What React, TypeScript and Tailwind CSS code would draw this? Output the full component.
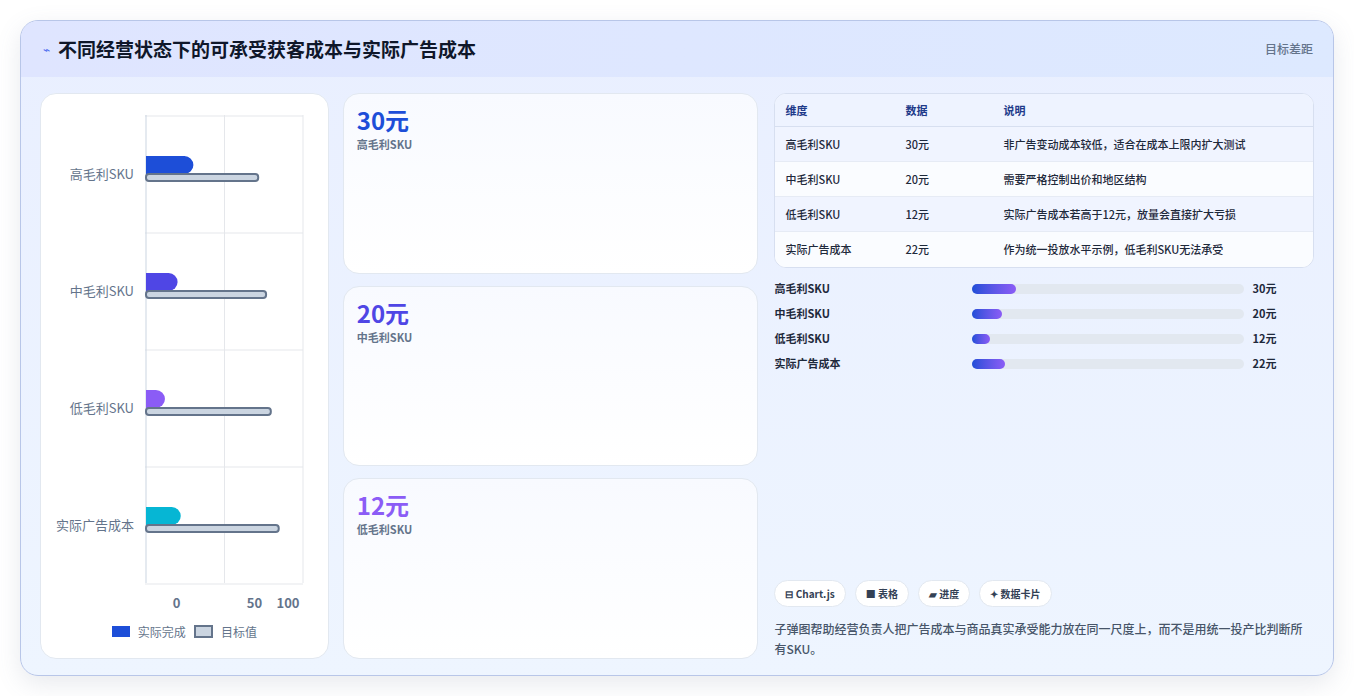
const font = { fontFamily: '"Noto Sans CJK SC", "Noto Sans", sans-serif' };

const rows = [
  { name: '高毛利SKU', actual: 30, target: 71, color: '#1d4ed8' },
  { name: '中毛利SKU', actual: 20, target: 76, color: '#4f46e5' },
  { name: '低毛利SKU', actual: 12, target: 79, color: '#8b5cf6' },
  { name: '实际广告成本', actual: 22, target: 84, color: '#06b6d4' },
];

const table = [
  ['高毛利SKU', '30元', '非广告变动成本较低，适合在成本上限内扩大测试'],
  ['中毛利SKU', '20元', '需要严格控制出价和地区结构'],
  ['低毛利SKU', '12元', '实际广告成本若高于12元，放量会直接扩大亏损'],
  ['实际广告成本', '22元', '作为统一投放水平示例，低毛利SKU无法承受'],
];

const cards = [
  { v: '30元', l: '高毛利SKU', c: 'text-[#1d4ed8]' },
  { v: '20元', l: '中毛利SKU', c: 'text-[#4f46e5]' },
  { v: '12元', l: '低毛利SKU', c: 'text-[#8b5cf6]' },
];

function Chart() {
  const W = 158;
  const H = 468;
  const slot = H / 4;
  return (
    <div className="flex h-full flex-col rounded-2xl border border-[#e2e8f0] bg-white pt-[21px]">
      <div className="flex">
        <div className="flex w-[105px] flex-col">
          {rows.map((r) => (
            <div key={r.name} className="flex h-[117px] items-center justify-end pr-[12px] text-[13px] text-[#64748b]">
              {r.name}
            </div>
          ))}
        </div>
        <svg width={W + 2} height={H + 2} className="-ml-px">
          {[0, 1, 2, 3, 4].map((i) => (
            <line key={i} x1={0} x2={W} y1={1 + i * slot} y2={1 + i * slot} stroke="#e5e7eb" />
          ))}
          {[0, 0.5, 1].map((f) => (
            <line key={f} x1={1 + f * (W - 1)} x2={1 + f * (W - 1)} y1={0} y2={H} stroke={f === 0 ? '#cbd5e1' : '#e5e7eb'} />
          ))}
          {rows.map((r, i) => {
            const y = i * slot + 41;
            const aw = (r.actual / 100) * W;
            const tw = (r.target / 100) * W;
            return (
              <g key={r.name}>
                <path d={`M1 ${y} H${aw - 8} a9 9 0 0 1 0 18 H1 Z`} fill={r.color} />
                <rect x={1} y={y + 18} width={tw} height={7} rx={3} fill="#cbd5e1" stroke="#64748b" strokeWidth={2} />
              </g>
            );
          })}
        </svg>
      </div>
      <div className="flex pl-[96px] pt-[8px] text-[13px] font-semibold text-[#64748b]">
        <span className="w-[79px] text-center">0</span>
        <span className="w-[79px] text-center -ml-[1px]">50</span>
        <span className="w-[30px] text-center -ml-[21px]">100</span>
      </div>
      <div className="mt-[10px] flex items-center justify-center gap-[8px] text-[12px] text-[#64748b]">
        <span className="h-[11px] w-[18px] bg-[#1d4ed8]" />
        <span>实际完成</span>
        <span className="h-[13px] w-[19px] border-2 border-[#64748b] bg-[#cbd5e1]" />
        <span>目标值</span>
      </div>
    </div>
  );
}

export default function App() {
  return (
    <div className="h-[696px] w-[1354px] bg-white pt-[20px] pl-[20px]" style={font}>
      <div className="h-[656px] w-[1314px] overflow-hidden rounded-[18px] border border-[#b8c6e8] bg-gradient-to-b from-[#e9efff] to-[#eef5ff] shadow-[0_8px_24px_rgba(100,116,139,0.15)]">
        <div className="flex h-[56px] items-center justify-between bg-gradient-to-r from-[#dfe5ff] to-[#dde9ff] pl-[22px] pr-[20px]">
          <div className="flex items-center gap-[8px]">
            <span className="text-[12px] text-[#4f6ef0]">⌁</span>
            <h1 className="text-[19px] font-bold text-[#0f172a]">不同经营状态下的可承受获客成本与实际广告成本</h1>
          </div>
          <span className="text-[12px] font-medium text-[#64748b]">目标差距</span>
        </div>
        <div className="flex h-[600px] gap-[14px] px-[19px] pt-[16px] pb-[18px]">
          <div className="w-[289px]">
            <Chart />
          </div>
          <div className="flex w-[416px] flex-col gap-[12px]">
            {cards.map((c) => (
              <div key={c.v} className="flex-1 rounded-2xl border border-[#e2e8f0] bg-gradient-to-b from-[#f8faff] to-white px-[13px] pt-[10px]">
                <div className={`text-[24px] leading-[32px] font-bold ${c.c}`}>{c.v}</div>
                <div className="text-[11px] font-semibold text-[#64748b]">{c.l}</div>
              </div>
            ))}
          </div>
          <div className="flex w-[542px] flex-col pl-[2px]">
            <div className="overflow-hidden rounded-xl border border-[#d7dff0] bg-white text-[11px] text-[#1e293b]">
              <div className="flex h-[33px] items-center border-b border-[#d7dff0] bg-[#eef3ff] font-semibold text-[#1e3a8a]">
                <span className="w-[130px] pl-[10px]">维度</span>
                <span className="w-[98px]">数据</span>
                <span>说明</span>
              </div>
              {table.map((r, i) => (
                <div key={r[0]} className={`flex h-[35px] items-center font-medium ${i < 3 ? 'border-b border-[#e6ebf5]' : ''} ${i % 2 === 0 ? 'bg-[#f0f4ff]' : 'bg-[#fafcff]'}`}>
                  <span className="w-[130px] pl-[10px]">{r[0]}</span>
                  <span className="w-[98px]">{r[1]}</span>
                  <span>{r[2]}</span>
                </div>
              ))}
            </div>
            <div className="mt-[11px] flex flex-col gap-[6px]">
              {rows.map((r) => (
                <div key={r.name} className="flex h-[19px] items-center text-[11px] font-semibold text-[#1e293b]">
                  <span className="w-[198px]">{r.name}</span>
                  <div className="h-[10px] w-[272px] rounded-full bg-[#e2e8f0]">
                    <div className="h-full rounded-full bg-gradient-to-r from-[#1d4ed8] to-[#8b5cf6]" style={{ width: `${(r.actual / 186) * 100}%` }} />
                  </div>
                  <span className="ml-[8px]">{r.actual}元</span>
                </div>
              ))}
            </div>
            <div className="mt-auto flex gap-[9px] text-[10px] font-semibold text-[#334155]">
              {['⊟ Chart.js', '■ 表格', '▰ 进度', '✦ 数据卡片'].map((t) => (
                <span key={t} className="flex h-[27px] items-center rounded-full border border-[#e2e8f0] bg-white px-[10px]">{t}</span>
              ))}
            </div>
            <p className="mt-[12px] text-[12px] leading-[20px] font-medium text-[#475569]">
              子弹图帮助经营负责人把广告成本与商品真实承受能力放在同一尺度上，而不是用统一投产比判断所有SKU。
            </p>
          </div>
        </div>
      </div>
    </div>
  );
}
